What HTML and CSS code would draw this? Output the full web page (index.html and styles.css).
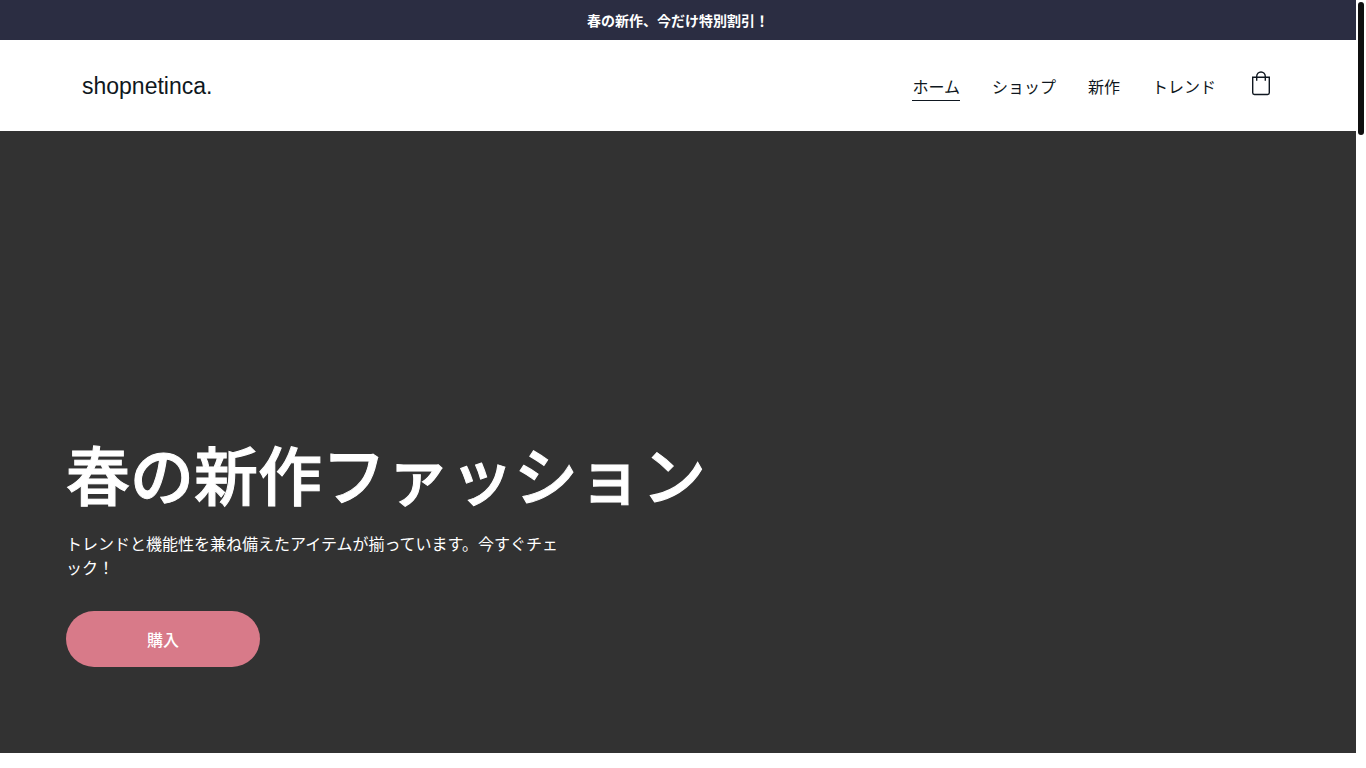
FILE: index.html
```html
<!DOCTYPE html>
<html lang="ja">
<head>
    <meta charset="UTF-8">
    <meta name="viewport" content="width=device-width, initial-scale=1.0">
    <title>shopnetinca.</title>
    <link rel="stylesheet" href="styles.css">
</head>
<body>
<div class="page">
    <div class="announcement">春の新作、今だけ特別割引！</div>

    <header class="header">
        <div class="container header-inner">
            <a href="#" class="logo">shopnetinca.</a>
            <div class="header-right">
                <nav class="nav">
                    <a href="#" class="active">ホーム</a>
                    <a href="#">ショップ</a>
                    <a href="#">新作</a>
                    <a href="#">トレンド</a>
                </nav>
                <a href="#" class="cart" aria-label="カート">
                    <svg width="24" height="30" viewBox="0 0 24 30" fill="none" stroke="currentColor" stroke-width="1.4">
                        <path d="M3.7 6.2h16.6v15.6a1.7 1.7 0 0 1-1.7 1.7H5.4a1.7 1.7 0 0 1-1.7-1.7z"/>
                        <path d="M7.7 9.8V5.6a4.3 4.6 0 0 1 8.6 0v4.2"/>
                    </svg>
                </a>
            </div>
        </div>
    </header>

    <main class="hero">
        <div class="container">
            <h1>春の新作ファッション</h1>
            <p>トレンドと機能性を兼ね備えたアイテムが揃っています。今すぐチェック！</p>
            <button type="button" class="buy-btn">購入</button>
        </div>
    </main>
</div>

<div class="scroll-track">
    <div class="scroll-thumb"></div>
</div>
</body>
</html>
```

FILE: styles.css
```css
* {
    box-sizing: border-box;
}

body {
    margin: 0;
    display: flex;
    min-height: 100vh;
    background-color: #fff;
    color: #0f1720;
    font-family: "Liberation Sans", "Noto Sans CJK JP", sans-serif;
    font-size: 16px;
    line-height: 24px;
}

a {
    color: inherit;
    text-decoration: none;
}

.page {
    flex: 1;
}

.container {
    width: 100%;
    max-width: 1224px;
    margin: 0 auto;
}

.announcement {
    padding: 8px 16px;
    background-color: #2b2d42;
    color: #fff;
    font-family: "Noto Sans CJK JP", sans-serif;
    font-size: 14px;
    font-weight: 600;
    text-align: center;
}

/* Header */
.header {
    padding: 28px 0 27px;
}

.header-inner {
    display: flex;
    justify-content: space-between;
    align-items: center;
    height: 36px;
    padding: 0 0 0 16px;
}

.logo {
    font-size: 23px;
}

.header-right {
    display: flex;
    align-items: center;
    gap: 33px;
    padding-right: 16px;
}

.nav {
    display: flex;
    gap: 32px;
}

.nav a {
    padding-top: 4px;
    border-bottom: 1px solid transparent;
}

.nav a.active {
    border-bottom-color: #0f1720;
}

.cart {
    margin-right: 1px;
}

.cart svg {
    display: block;
}

/* Hero */
.hero {
    display: flex;
    align-items: flex-end;
    min-height: 81vh;
    padding-bottom: 86px;
    background-color: #323232;
    color: #fff;
}

.hero h1 {
    margin: 0 0 24px;
    font-family: "Noto Sans CJK JP", sans-serif;
    font-size: 64px;
    font-weight: 500;
    line-height: 74px;
    -webkit-text-stroke: 1px #fff;
}

.hero p {
    max-width: 500px;
    margin: 0 0 30px;
}

.buy-btn {
    width: 194px;
    height: 56px;
    border: none;
    border-radius: 28px;
    background-color: #d87a89;
    color: #fff;
    font-family: "Noto Sans CJK JP", sans-serif;
    font-size: 16px;
    font-weight: 500;
    cursor: pointer;
}

/* Scrollbar */
.scroll-track {
    width: 10px;
    padding: 2px;
}

.scroll-thumb {
    height: 133px;
    border-radius: 3px;
    background-color: #101010;
}
```
